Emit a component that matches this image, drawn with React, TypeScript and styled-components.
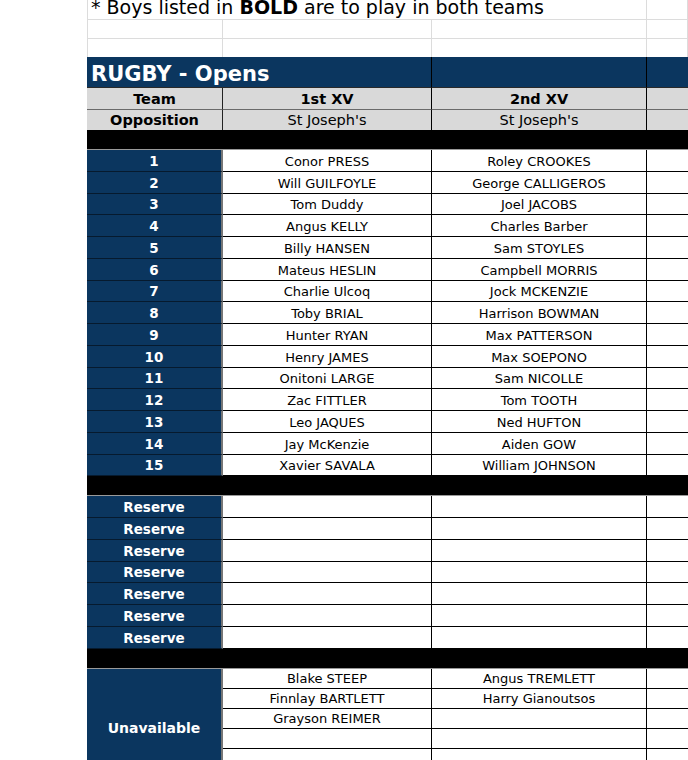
import React from "react";
import styled, { createGlobalStyle } from "styled-components";

const Global = createGlobalStyle`
  html, body { margin: 0; padding: 0; overflow: hidden; background: #fff; }
  body { font-family: "DejaVu Sans", Verdana, sans-serif; }
`;

const NAVY = "#0b365f";
const GRID = "#dcdcdc";

const Sheet = styled.div`
  display: grid;
  grid-template-columns: 136px 209px 215px 41px;
  width: 601px;
  margin-left: 87px;
`;

const NoteCell = styled.div<{ $span?: number; $first?: boolean; $h: number; $bottom?: boolean }>`
  grid-column: span ${(p) => p.$span ?? 1};
  height: ${(p) => p.$h}px;
  box-sizing: border-box;
  border-right: 1px solid ${GRID};
  border-left: ${(p) => (p.$first ? `1px solid ${GRID}` : "none")};
  border-bottom: ${(p) => (p.$bottom ? `1px solid ${GRID}` : "none")};
  position: relative;
  overflow: visible;
`;

const NoteText = styled.div`
  position: absolute;
  left: 3px;
  bottom: 2px;
  white-space: nowrap;
  font-size: 19px;
  line-height: 19px;
  color: #000;
  b { font-weight: bold; }
`;

const TitleCell = styled.div<{ $span?: number; $last?: boolean }>`
  grid-column: span ${(p) => p.$span ?? 1};
  height: 31px;
  box-sizing: border-box;
  background: ${NAVY};
  border-bottom: 1px solid #2a2a2a;
  border-right: ${(p) => (p.$last ? "none" : "1px solid #000")};
  color: #fff;
  font-weight: bold;
  font-size: 21px;
  display: flex;
  align-items: center;
  padding-left: 4px;
  padding-top: 3px;
  white-space: nowrap;
`;

const HeadCell = styled.div<{ $h: number; $bold?: boolean; $border?: string; $right?: string }>`
  height: ${(p) => p.$h}px;
  box-sizing: border-box;
  background: #d9d9d9;
  border-bottom: ${(p) => p.$border ?? "none"};
  border-right: ${(p) => p.$right ?? "none"};
  display: flex;
  align-items: center;
  justify-content: center;
  font-size: 14.5px;
  font-weight: ${(p) => (p.$bold ? "bold" : "normal")};
  color: #000;
  white-space: nowrap;
`;

const Band = styled.div`
  grid-column: 1 / -1;
  height: 20px;
  box-sizing: border-box;
  background: #000;
  border-bottom: 1px solid #9a9a9a;
`;

const LabelCell = styled.div<{ $h: number; $size?: number; $rows?: number }>`
  grid-row: span ${(p) => p.$rows ?? 1};
  height: ${(p) => p.$h}px;
  box-sizing: border-box;
  background: ${NAVY};
  border-right: 2px solid #767676;
  border-bottom: 1px solid #061a2e;
  color: #fff;
  font-weight: bold;
  font-size: ${(p) => p.$size ?? 13.5}px;
  display: flex;
  align-items: center;
  justify-content: center;
  padding-top: ${(p) => (p.$rows ? 0 : 1)}px;
`;

const NameCell = styled.div<{ $h: number; $last?: boolean; $pad?: number }>`
  height: ${(p) => p.$h}px;
  box-sizing: border-box;
  background: #fff;
  border-bottom: 1px solid #000;
  border-right: ${(p) => (p.$last ? "none" : "1px solid #000")};
  display: flex;
  align-items: center;
  justify-content: center;
  font-size: 13px;
  color: #000;
  white-space: nowrap;
  padding-top: ${(p) => p.$pad ?? 2}px;
`;

const first = [
  "Conor PRESS", "Will GUILFOYLE", "Tom Duddy", "Angus KELLY", "Billy HANSEN",
  "Mateus HESLIN", "Charlie Ulcoq", "Toby BRIAL", "Hunter RYAN", "Henry JAMES",
  "Onitoni LARGE", "Zac FITTLER", "Leo JAQUES", "Jay McKenzie", "Xavier SAVALA",
];
const second = [
  "Roley CROOKES", "George CALLIGEROS", "Joel JACOBS", "Charles Barber", "Sam STOYLES",
  "Campbell MORRIS", "Jock MCKENZIE", "Harrison BOWMAN", "Max PATTERSON", "Max SOEPONO",
  "Sam NICOLLE", "Tom TOOTH", "Ned HUFTON", "Aiden GOW", "William JOHNSON",
];
const unavailable: [string, string][] = [
  ["Blake STEEP", "Angus TREMLETT"],
  ["Finnlay BARTLETT", "Harry Gianoutsos"],
  ["Grayson REIMER", ""],
  ["", ""],
  ["", ""],
  ["", ""],
];

const ROW = 21.75;

export default function App() {
  return (
    <>
      <Global />
      <Sheet>
        <NoteCell $span={3} $first $h={20} $bottom>
          <NoteText>
            * Boys listed in <b>BOLD</b> are to play in both teams
          </NoteText>
        </NoteCell>
        <NoteCell $h={20} $bottom />
        {[0, 1, 2, 3].map((i) => (
          <NoteCell key={"a" + i} $first={i === 0} $h={19} $bottom />
        ))}
        {[0, 1, 2, 3].map((i) => (
          <NoteCell key={"b" + i} $first={i === 0} $h={18} />
        ))}

        <TitleCell $span={2}>RUGBY - Opens</TitleCell>
        <TitleCell />
        <TitleCell $last />

        <HeadCell $h={22} $bold $border="1px solid #6a6a6a" $right="1px solid #222">Team</HeadCell>
        <HeadCell $h={22} $bold $border="1px solid #6a6a6a" $right="1px solid #000">1st XV</HeadCell>
        <HeadCell $h={22} $bold $border="1px solid #6a6a6a" $right="1px solid #000">2nd XV</HeadCell>
        <HeadCell $h={22} $border="1px solid #6a6a6a" />

        <HeadCell $h={20} $bold $right="1px solid #222">Opposition</HeadCell>
        <HeadCell $h={20} $right="1px solid #000">St Joseph's</HeadCell>
        <HeadCell $h={20} $right="1px solid #000">St Joseph's</HeadCell>
        <HeadCell $h={20} />

        <Band />

        {first.map((name, i) => (
          <React.Fragment key={"r" + i}>
            <LabelCell $h={ROW}>{i + 1}</LabelCell>
            <NameCell $h={ROW}>{name}</NameCell>
            <NameCell $h={ROW}>{second[i]}</NameCell>
            <NameCell $h={ROW} $last />
          </React.Fragment>
        ))}

        <Band />

        {Array.from({ length: 7 }).map((_, i) => (
          <React.Fragment key={"res" + i}>
            <LabelCell $h={ROW}>Reserve</LabelCell>
            <NameCell $h={ROW} />
            <NameCell $h={ROW} />
            <NameCell $h={ROW} $last />
          </React.Fragment>
        ))}

        <Band />

        <LabelCell $h={120} $rows={6} $size={14}>Unavailable</LabelCell>
        {unavailable.map(([a, b], i) => (
          <React.Fragment key={"u" + i}>
            <NameCell $h={20} $pad={0}>{a}</NameCell>
            <NameCell $h={20} $pad={0}>{b}</NameCell>
            <NameCell $h={20} $pad={0} $last />
          </React.Fragment>
        ))}
      </Sheet>
    </>
  );
}
